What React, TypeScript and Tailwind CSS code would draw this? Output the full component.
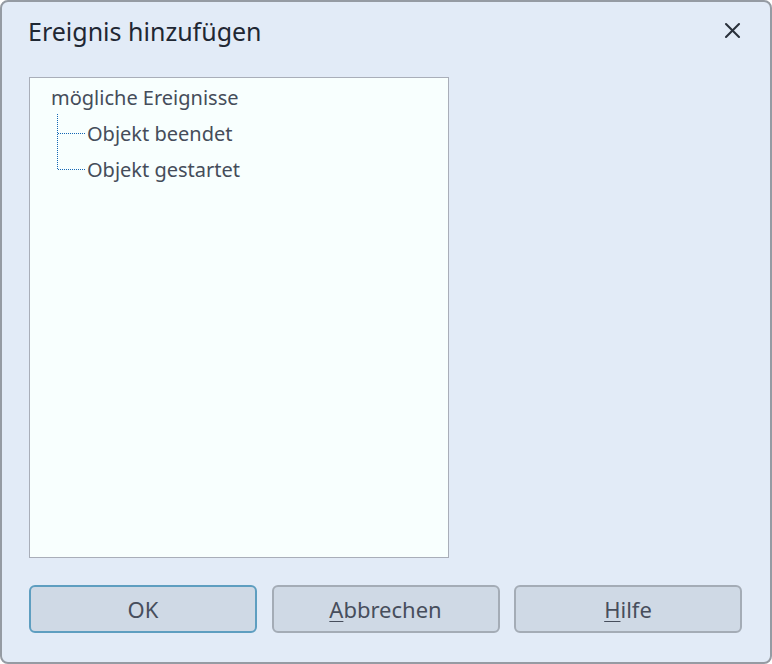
import React from "react";

const font = { fontFamily: '"Noto Sans", "Open Sans", sans-serif' };

// dotted tree connector, drawn like the classic Win32 tree view
const TreeLine = ({ last }: { last?: boolean }) => (
  <svg width="36" height="36" viewBox="0 0 36 36" className="shrink-0 overflow-visible" shapeRendering="crispEdges">
    <path
      d={last ? "M6.5 -2 V17.5 H34" : "M6.5 -2 V36 M6.5 17.5 H34"}
      fill="none"
      stroke="#1466b4"
      strokeWidth="1"
      strokeDasharray="1 1"
    />
  </svg>
);

const DialogButton = ({
  children,
  primary,
}: {
  children: React.ReactNode;
  primary?: boolean;
}) => (
  <button
    className={`w-[228px] h-[48px] rounded-[6px] border-2 bg-[#cfd9e5] text-[22px] text-[#474e5c] ${
      primary ? "border-[#5e9ec0]" : "border-[#a4acb6]"
    }`}
  >
    {children}
  </button>
);

export default function App() {
  return (
    <div className="w-[772px] h-[664px] bg-white" style={font}>
      <div className="w-full h-full rounded-[8px] border-2 border-[#959ba3] bg-[#e2ebf7] flex flex-col">
        <div className="flex items-center justify-between h-[60px] pl-[26px] pr-[29px]">
          <h1 className="text-[25px] leading-[30px] text-[#1f2733] mt-[-2px]">Ereignis hinzufügen</h1>
          <svg width="17" height="17" viewBox="0 0 17 17" className="mt-[-4px]">
            <path d="M2 2 L15 15 M15 2 L2 15" stroke="#2a313c" strokeWidth="2.1" strokeLinecap="round" />
          </svg>
        </div>

        <div className="pl-[27px] pt-[15px]">
          <div className="w-[420px] h-[481px] border border-[#a9aeb9] bg-[#f8fffe] pt-[2px]">
            <div className="pl-[21px] h-[36px] flex items-center text-[20px] text-[#454d5a]">
              mögliche Ereignisse
            </div>
            <div className="pl-[21px] flex items-center text-[20px] text-[#454d5a]">
              <TreeLine />
              <span>Objekt beendet</span>
            </div>
            <div className="pl-[21px] flex items-center text-[20px] text-[#454d5a]">
              <TreeLine last />
              <span>Objekt gestartet</span>
            </div>
          </div>
        </div>

        <div className="flex gap-[14.5px] pl-[27px] pt-[27px]">
          <DialogButton primary>OK</DialogButton>
          <DialogButton>
            <span className="underline underline-offset-[3px] decoration-1">A</span>bbrechen
          </DialogButton>
          <DialogButton>
            <span className="underline underline-offset-[3px] decoration-1">H</span>ilfe
          </DialogButton>
        </div>
      </div>
    </div>
  );
}
